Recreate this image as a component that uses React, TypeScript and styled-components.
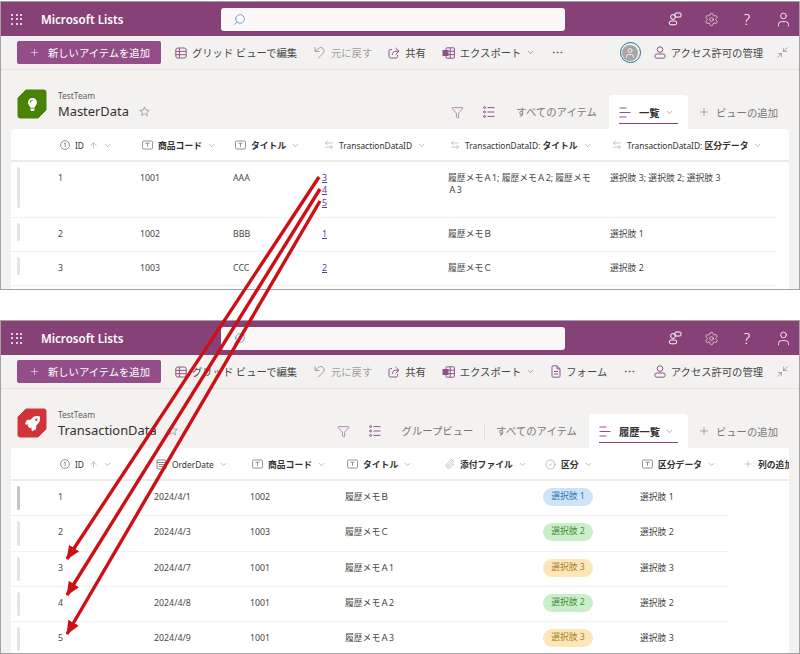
import React from "react";
import styled, { createGlobalStyle } from "styled-components";
import {
  ArrowLeftRight,
  ArrowUp,
  ChevronDown,
  CircleCheck,
  Funnel,
  Minimize2,
  MoreHorizontal,
  Paperclip,
  Plus,
  Search,
  Settings,
  User,
} from "lucide-react";
import { FaLightbulb, FaRocket } from "react-icons/fa";

const FONT = `"Noto Sans", "Noto Sans CJK JP", sans-serif`;
const PURPLE = "#864177";
const ICON = "#8f5486";
const RED = "#cc1016";

const GlobalStyle = createGlobalStyle`
  html, body {
    margin: 0;
    background: #fff;
    font-family: ${FONT};
  }
  * { box-sizing: border-box; }
`;

const Page = styled.div`
  position: relative;
  width: 800px;
  height: 654px;
  overflow: hidden;
  padding-top: 1px;
`;

const Panel = styled.section<{ $height: number }>`
  height: ${(p) => p.$height}px;
  border: 1px solid #a3a3a3;
  background: #f3f2f1;
  overflow: hidden;
  display: flex;
  flex-direction: column;
  & + & { margin-top: 30px; }
`;

const TopBar = styled.header`
  flex: none;
  height: 34px;
  background: ${PURPLE};
  color: #fff;
  display: flex;
  align-items: center;
  padding: 0 0 0 10px;
`;

const Waffle = styled.div`
  display: grid;
  grid-template-columns: repeat(3, 2px);
  gap: 2.5px;
  width: 12px;
`;

const Dot = styled.i`
  width: 2px;
  height: 2px;
  background: #fff;
  border-radius: 50%;
`;

const AppName = styled.div`
  margin-left: 18px;
  width: 180px;
  font-size: 11.6px;
  font-weight: 600;
  white-space: nowrap;
`;

const SearchBox = styled.div`
  width: 344px;
  height: 23px;
  background: #faf9f8;
  border-radius: 3px;
  display: flex;
  align-items: center;
  padding-left: 12px;
  color: #2b7cb8;
  svg { transform: scaleX(-1); }
`;

const TopIcons = styled.div`
  margin-left: auto;
  margin-right: -2px;
  display: flex;
`;

const TopIcon = styled.div`
  width: 36px;
  height: 34px;
  display: flex;
  align-items: center;
  justify-content: center;
  font-size: 15px;
  font-weight: 300;
`;

const Toolbar = styled.div`
  flex: none;
  height: 34px;
  display: flex;
  align-items: center;
  gap: 16px;
  padding: 0 10px 0 16px;
  border-bottom: 1px solid #e6e4e2;
  font-size: 10.3px;
  color: #484644;
  white-space: nowrap;
`;

const NewButton = styled.div`
  flex: none;
  width: 144px;
  height: 23px;
  margin-right: -2px;
  background: #934d88;
  border-radius: 2px;
  color: #fff;
  display: flex;
  align-items: center;
  gap: 8px;
  padding-left: 12px;
`;

const Tool = styled.div<{ $muted?: boolean }>`
  display: flex;
  align-items: center;
  gap: 5px;
  color: ${(p) => (p.$muted ? "#a19f9d" : "#484644")};
  svg { color: ${(p) => (p.$muted ? "#a19f9d" : ICON)}; flex: none; }
`;

const ToolChevron = styled(ChevronDown)`
  margin-left: 0;
  color: #605e5c !important;
`;

const More = styled(MoreHorizontal)`
  color: #605e5c;
  flex: none;
`;

const ToolRight = styled.div`
  margin-left: auto;
  display: flex;
  align-items: center;
  gap: 13px;
`;

const AvatarRing = styled.div`
  width: 21px;
  height: 21px;
  border-radius: 50%;
  border: 1.5px solid #1b6f9f;
  padding: 1.5px;
  display: flex;
`;

const AvatarFace = styled.div`
  flex: 1;
  border-radius: 50%;
  background: #a8a6a4;
  color: #f3f2f1;
  display: flex;
  align-items: center;
  justify-content: center;
`;

const Body = styled.div`
  flex: 1;
  min-height: 0;
  padding: 0 10px;
  display: flex;
  flex-direction: column;
`;

const TitleRow = styled.div`
  flex: none;
  height: 59px;
  display: flex;
  align-items: flex-end;
  padding-left: 6px;
`;

const LogoBox = styled.div`
  position: relative;
  width: 30px;
  height: 30px;
  margin-bottom: 10px;
  color: #fff;
  display: flex;
  align-items: center;
  justify-content: center;
  svg:first-child { position: absolute; inset: 0; }
  svg:last-child { position: relative; }
`;

const TitleText = styled.div`
  margin: 0 0 8px 11px;
  display: flex;
  flex-direction: column;
`;

const TeamName = styled.div`
  font-size: 8.4px;
  line-height: 12px;
  color: #605e5c;
`;

const ListName = styled.div`
  font-size: 12.9px;
  line-height: 19px;
  color: #323130;
  display: flex;
  align-items: center;
  gap: 10px;
  white-space: nowrap;
  svg { color: #8a8886; }
`;

const ViewBar = styled.div`
  margin-left: auto;
  height: 34px;
  display: flex;
  align-items: center;
  font-size: 10.35px;
  color: #7a7876;
  white-space: nowrap;
  padding-right: 11px;
`;

const ViewIcon = styled.div`
  color: ${ICON};
  display: flex;
  margin-right: 19px;
  & + & { margin-right: 11px; }
`;

const ViewLink = styled.div<{ $divided?: boolean }>`
  margin-left: 10px;
  padding-right: 11px;
  margin-right: ${(p) => (p.$divided ? "1px" : "0")};
  border-right: ${(p) => (p.$divided ? "1px solid #e1dfdd" : "none")};
  line-height: 17px;
`;

const ActiveTab = styled.div<{ $width: number }>`
  position: relative;
  width: ${(p) => p.$width}px;
  height: 34px;
  background: #fff;
  border-radius: 4px 4px 0 0;
  margin-left: 1px;
  padding: 0 10px 0 10px;
  display: flex;
  align-items: center;
  gap: 8px;
  color: #323130;
  font-weight: 700;
  font-size: 10.3px;
  svg { color: ${ICON}; flex: none; }
  svg + span + svg { color: #605e5c; margin-left: -3px; }
  &::after {
    content: "";
    position: absolute;
    left: 10px;
    right: 10px;
    bottom: 5px;
    height: 1.5px;
    background: ${PURPLE};
  }
`;

const AddView = styled.div`
  margin-left: 10px;
  display: flex;
  align-items: center;
  gap: 6px;
  svg { color: #605e5c; }
`;

const Card = styled.div`
  flex: 1;
  min-height: 0;
  background: #fff;
  border-radius: 3px 3px 0 0;
  overflow: hidden;
`;

const HeaderRow = styled.div<{ $cols: string }>`
  height: 33px;
  padding-top: 1px;
  display: grid;
  grid-template-columns: ${(p) => p.$cols};
  align-items: center;
  border-bottom: 2px solid #edebe9;
  font-size: 8.4px;
  color: #323130;
  white-space: nowrap;
`;

const HeadCell = styled.div`
  display: flex;
  align-items: center;
  gap: 5px;
  padding-left: 2px;
  overflow: visible;
  strong { font-weight: 700; font-size: 8.8px; }
  svg { color: #7a7876; flex: none; }
`;

const Row = styled.div<{ $cols: string; $width: number; $height: number }>`
  width: ${(p) => p.$width}px;
  height: ${(p) => p.$height}px;
  display: grid;
  grid-template-columns: ${(p) => p.$cols};
  border-bottom: 1px solid #f3f2f1;
  font-size: 8.8px;
  line-height: 12.4px;
  color: #484644;
`;

const HandleSlot = styled.div`
  padding: 5px 0 5px 6px;
  display: flex;
`;

const Handle = styled.div<{ $dark?: boolean }>`
  width: 3px;
  border-radius: 2px;
  background: ${(p) => (p.$dark ? "#c4c4c4" : "#e4e4e4")};
`;

const Cell = styled.div`
  padding-top: 10px;
  padding-right: 16px;
`;

const LinkLine = styled.a`
  display: block;
  color: #4b3f9e;
  text-decoration: underline;
`;

const PILL = {
  blue: { bg: "#cfe4f7", fg: "#2b78b5" },
  green: { bg: "#caefc8", fg: "#4b8a3c" },
  orange: { bg: "#fde7b9", fg: "#a5812c" },
};

const Pill = styled.span<{ $tone: keyof typeof PILL }>`
  display: block;
  margin-top: -3px;
  width: 50px;
  height: 18px;
  line-height: 17px;
  text-align: center;
  border-radius: 9px;
  background: ${(p) => PILL[p.$tone].bg};
  color: ${(p) => PILL[p.$tone].fg};
`;

const Overlay = styled.svg`
  position: absolute;
  inset: 0;
  pointer-events: none;
`;

const TypeIcon = () => (
  <svg width="11" height="10" viewBox="0 0 11 10" fill="none" stroke="currentColor" strokeWidth=".8">
    <rect x=".5" y="1" width="10" height="8" rx="1.2" />
    <path d="M3.5 3.3h4M5.5 3.3v3.600" />
  </svg>
);

const NumberIcon = () => (
  <svg width="10" height="10" viewBox="0 0 10 10" fill="none" stroke="currentColor" strokeWidth=".8">
    <circle cx="5" cy="5" r="4.400" />
    <path d="M4 3.600 5.200 2.800v4.600" />
  </svg>
);

const DateIcon = () => (
  <svg width="11" height="11" viewBox="0 0 11 11" fill="none" stroke="currentColor" strokeWidth=".9">
    <rect x="1" y="1" width="9" height="9" rx="1" />
    <path d="M1 3.500h9M3 5.500h5M3 7.500h5" />
  </svg>
);

const GridIcon = () => (
  <svg width="12" height="12" viewBox="0 0 12 12" fill="none" stroke="currentColor" strokeWidth="1">
    <rect x=".8" y="1" width="10.400" height="10" rx="2" />
    <path d="M.8 4.400h10.400M.8 7.700h10.400M4.400 1v10" />
  </svg>
);

const UndoIcon = () => (
  <svg width="13" height="13" viewBox="0 0 13 13" fill="none" stroke="currentColor" strokeWidth="1">
    <path d="M2 1v4.500h4.500M2 5.500 5.500 2.400a3.400 3.400 0 0 1 4.800 4.800L5 12.300" />
  </svg>
);

const ShareIcon = () => (
  <svg width="12" height="12" viewBox="0 0 12 12" fill="none" stroke="currentColor" strokeWidth="1">
    <path d="M4 2.500H2.500a1.500 1.500 0 0 0-1.500 1.500v5.500A1.500 1.500 0 0 0 2.500 11H8a1.500 1.500 0 0 0 1.500-1.500V8" />
    <path d="M7.500 1 11 4.300 7.500 7.600M11 4.300H7.500C5.500 4.300 4.300 5.700 4.300 8" />
  </svg>
);

const ExcelIcon = () => (
  <svg width="13" height="12" viewBox="0 0 13 12" fill="none" stroke="currentColor" strokeWidth="1">
    <rect x="4" y=".8" width="8.400" height="10.400" rx=".8" />
    <path d="M4 4.200h8.400M4 7.600h8.400M8.200.8v10.400" />
    <rect x=".5" y="3" width="6" height="6" fill="currentColor" stroke="none" />
  </svg>
);

const FormIcon = () => (
  <svg width="10" height="13" viewBox="0 0 10 13" fill="none" stroke="currentColor" strokeWidth="1">
    <path d="M1 1.800a1 1 0 0 1 1-1h4l3 3v7.400a1 1 0 0 1-1 1H2a1 1 0 0 1-1-1zM6 .8v3h3M3 6.500h4M3 9h4" />
  </svg>
);

const PeopleIcon = () => (
  <svg width="12" height="13" viewBox="0 0 12 13" fill="none" stroke="currentColor" strokeWidth="1">
    <circle cx="6" cy="3.600" r="2.800" />
    <rect x=".8" y="8" width="10.400" height="4.200" rx="2.100" />
  </svg>
);

const ChatPeopleIcon = () => (
  <svg width="14" height="14" viewBox="0 0 14 14" fill="none" stroke="#fff" strokeWidth="1">
    <rect x="7" y="1" width="6" height="4" rx="1" />
    <circle cx="5" cy="5" r="2.400" />
    <rect x="1.200" y="9" width="7.600" height="3.800" rx="1.900" />
  </svg>
);

const ListIcon = () => (
  <svg width="12" height="12" viewBox="0 0 12 12" fill="none" stroke="currentColor" strokeWidth="1">
    <path d="M4.500 1.600H11.500M4.500 6H11.500M4.500 10.400H11.500" />
    <rect x=".6" y=".8" width="2" height="1.600" rx=".6" />
    <rect x=".6" y="5.200" width="2" height="1.600" rx=".6" />
    <rect x=".6" y="9.600" width="2" height="1.600" rx=".6" />
  </svg>
);

const LinesIcon = () => (
  <svg width="12" height="11" viewBox="0 0 12 11" fill="none" stroke="currentColor" strokeWidth="1">
    <path d="M.5 1h7M.5 5.500h11M.5 10h7" />
  </svg>
);

const StarIcon = () => (
  <svg width="11" height="11" viewBox="0 0 24 24" fill="none" stroke="currentColor" strokeWidth="1.600">
    <path d="m12 2 3 6.800 7.300.7-5.500 4.900 1.600 7.200L12 17l-6.400 3.600 1.600-7.200L1.700 9.500 9 8.800z" />
  </svg>
);

const LogoShape = ({ color }: { color: string }) => (
  <svg width="30" height="30" viewBox="0 0 30 30">
    <path d="M9 1H27a2 2 0 0 1 2 2V21l-8 8H3a2 2 0 0 1-2-2V9z" fill={color} stroke={color} strokeWidth="1" strokeLinejoin="round" />
  </svg>
);

const COL_A = "47px 82px 93px 89px 126px 162px 1fr";
const COL_B = "47px 96px 96px 95px 98px 100px 97px 101px 1fr";

type Head = { icon: React.ReactNode; label: React.ReactNode; sort?: boolean };

const swap = <ArrowLeftRight size={10} strokeWidth={1} />;

const HEADS_A: Head[] = [
  { icon: <NumberIcon />, label: "ID", sort: true },
  { icon: <TypeIcon />, label: <strong>商品コード</strong> },
  { icon: <TypeIcon />, label: <strong>タイトル</strong> },
  { icon: swap, label: "TransactionDataID" },
  { icon: swap, label: <>TransactionDataID: <strong>タイトル</strong></> },
  { icon: swap, label: <>TransactionDataID: <strong>区分データ</strong></> },
];

const HEADS_B: Head[] = [
  { icon: <NumberIcon />, label: "ID", sort: true },
  { icon: <DateIcon />, label: "OrderDate" },
  { icon: <TypeIcon />, label: <strong>商品コード</strong> },
  { icon: <TypeIcon />, label: <strong>タイトル</strong> },
  { icon: <Paperclip size={10} strokeWidth={1} />, label: <strong>添付ファイル</strong> },
  { icon: <CircleCheck size={11} strokeWidth={1} />, label: <strong>区分</strong> },
  { icon: <TypeIcon />, label: <strong>区分データ</strong> },
];

const ROWS_A = [
  { id: "1", code: "1001", title: "AAA", links: ["3", "4", "5"], memo: "履歴メモＡ1; 履歴メモＡ2; 履歴メモＡ3", kind: "選択肢 3; 選択肢 2; 選択肢 3", h: 56 },
  { id: "2", code: "1002", title: "BBB", links: ["1"], memo: "履歴メモＢ", kind: "選択肢 1", h: 34 },
  { id: "3", code: "1003", title: "CCC", links: ["2"], memo: "履歴メモＣ", kind: "選択肢 2", h: 34 },
];

const ROWS_B: { id: string; date: string; code: string; memo: string; n: string; tone: keyof typeof PILL }[] = [
  { id: "1", date: "2024/4/1", code: "1002", memo: "履歴メモＢ", n: "選択肢 1", tone: "blue" },
  { id: "2", date: "2024/4/3", code: "1003", memo: "履歴メモＣ", n: "選択肢 2", tone: "green" },
  { id: "3", date: "2024/4/7", code: "1001", memo: "履歴メモＡ1", n: "選択肢 3", tone: "orange" },
  { id: "4", date: "2024/4/8", code: "1001", memo: "履歴メモＡ2", n: "選択肢 2", tone: "green" },
  { id: "5", date: "2024/4/9", code: "1001", memo: "履歴メモＡ3", n: "選択肢 3", tone: "orange" },
];

const ARROWS = [
  [319, 177, 67, 559],
  [320, 189, 67, 595],
  [320, 201, 67, 634],
];

function AppBar() {
  return (
    <TopBar>
      <Waffle>
        {Array.from({ length: 9 }, (_, i) => <Dot key={i} />)}
      </Waffle>
      <AppName>Microsoft Lists</AppName>
      <SearchBox>
        <Search size={13} strokeWidth={1.2} />
      </SearchBox>
      <TopIcons>
        <TopIcon><ChatPeopleIcon /></TopIcon>
        <TopIcon><Settings size={15} strokeWidth={1} /></TopIcon>
        <TopIcon>?</TopIcon>
        <TopIcon><User size={17} strokeWidth={1.2} /></TopIcon>
      </TopIcons>
    </TopBar>
  );
}

function Actions({ form }: { form?: boolean }) {
  return (
    <Toolbar>
      <NewButton>
        <Plus size={11} strokeWidth={1.2} />
        新しいアイテムを追加
      </NewButton>
      <Tool><GridIcon />グリッド ビューで編集</Tool>
      <Tool $muted><UndoIcon />元に戻す</Tool>
      <Tool><ShareIcon />共有</Tool>
      <Tool><ExcelIcon />エクスポート<ToolChevron size={9} strokeWidth={1.4} /></Tool>
      {form && <Tool><FormIcon />フォーム</Tool>}
      <More size={13} strokeWidth={1.4} />
      <ToolRight>
        {!form && (
          <AvatarRing>
            <AvatarFace><User size={12} strokeWidth={2} /></AvatarFace>
          </AvatarRing>
        )}
        <Tool><PeopleIcon />アクセス許可の管理</Tool>
        <Tool><Minimize2 size={13} strokeWidth={1} /></Tool>
      </ToolRight>
    </Toolbar>
  );
}

function Heading({ logo, name, views, active, activeWidth }: {
  logo: React.ReactNode;
  name: string;
  views: string[];
  active: string;
  activeWidth: number;
}) {
  return (
    <TitleRow>
      {logo}
      <TitleText>
        <TeamName>TestTeam</TeamName>
        <ListName>{name}<StarIcon /></ListName>
      </TitleText>
      <ViewBar>
        <ViewIcon><Funnel size={13} strokeWidth={1.2} /></ViewIcon>
        <ViewIcon><ListIcon /></ViewIcon>
        {views.map((v, i) => (
          <ViewLink key={v} $divided={i < views.length - 1}>{v}</ViewLink>
        ))}
        <ActiveTab $width={activeWidth}>
          <LinesIcon />
          <span>{active}</span>
          <ChevronDown size={9} strokeWidth={1.3} />
        </ActiveTab>
        <AddView>
          <Plus size={12} strokeWidth={1} />
          ビューの追加
        </AddView>
      </ViewBar>
    </TitleRow>
  );
}

function HeaderCells({ heads }: { heads: Head[] }) {
  return (
    <>
      <div />
      {heads.map((h, i) => (
        <HeadCell key={i}>
          {h.icon}
          <span>{h.label}</span>
          {h.sort && <ArrowUp size={9} strokeWidth={1.2} />}
          <ChevronDown size={9} strokeWidth={1.3} />
        </HeadCell>
      ))}
    </>
  );
}

export default function App() {
  return (
    <Page>
      <GlobalStyle />
      <Panel $height={289}>
        <AppBar />
        <Actions />
        <Body>
          <Heading
            logo={<LogoBox><LogoShape color="#498205" /><FaLightbulb size={13} /></LogoBox>}
            name="MasterData"
            views={["すべてのアイテム"]}
            active="一覧"
            activeWidth={79}
          />
          <Card>
            <HeaderRow $cols={COL_A}>
              <HeaderCells heads={HEADS_A} />
            </HeaderRow>
            {ROWS_A.map((r) => (
              <Row key={r.id} $cols={COL_A} $width={766} $height={r.h}>
                <HandleSlot><Handle /></HandleSlot>
                <Cell>{r.id}</Cell>
                <Cell>{r.code}</Cell>
                <Cell>{r.title}</Cell>
                <Cell>{r.links.map((l) => <LinkLine key={l}>{l}</LinkLine>)}</Cell>
                <Cell>{r.memo}</Cell>
                <Cell>{r.kind}</Cell>
                <div />
              </Row>
            ))}
          </Card>
        </Body>
      </Panel>
      <Panel $height={334}>
        <AppBar />
        <Actions form />
        <Body>
          <Heading
            logo={<LogoBox><LogoShape color="#d13438" /><FaRocket size={15} /></LogoBox>}
            name="TransactionData"
            views={["グループビュー", "すべてのアイテム"]}
            active="履歴一覧"
            activeWidth={99}
          />
          <Card>
            <HeaderRow $cols={COL_B}>
              <HeaderCells heads={HEADS_B} />
              <HeadCell>
                <Plus size={10} strokeWidth={1} />
                <span><strong>列の追加</strong></span>
              </HeadCell>
            </HeaderRow>
            {ROWS_B.map((r, i) => (
              <Row key={r.id} $cols={COL_B} $width={718} $height={35.3}>
                <HandleSlot><Handle $dark={i === 0} /></HandleSlot>
                <Cell>{r.id}</Cell>
                <Cell>{r.date}</Cell>
                <Cell>{r.code}</Cell>
                <Cell>{r.memo}</Cell>
                <Cell />
                <Cell><Pill $tone={r.tone}>{r.n}</Pill></Cell>
                <Cell>{r.n}</Cell>
              </Row>
            ))}
          </Card>
        </Body>
      </Panel>
      <Overlay width="800" height="654" viewBox="0 0 800 654">
        <defs>
          <marker id="head" markerUnits="userSpaceOnUse" markerWidth="14" markerHeight="12" refX="13" refY="6" orient="auto">
            <path d="M0 0 14 6 0 12z" fill={RED} />
          </marker>
        </defs>
        {ARROWS.map(([x1, y1, x2, y2]) => (
          <line key={y1} x1={x1} y1={y1} x2={x2} y2={y2} stroke={RED} strokeWidth="3.4" markerEnd="url(#head)" />
        ))}
      </Overlay>
    </Page>
  );
}
